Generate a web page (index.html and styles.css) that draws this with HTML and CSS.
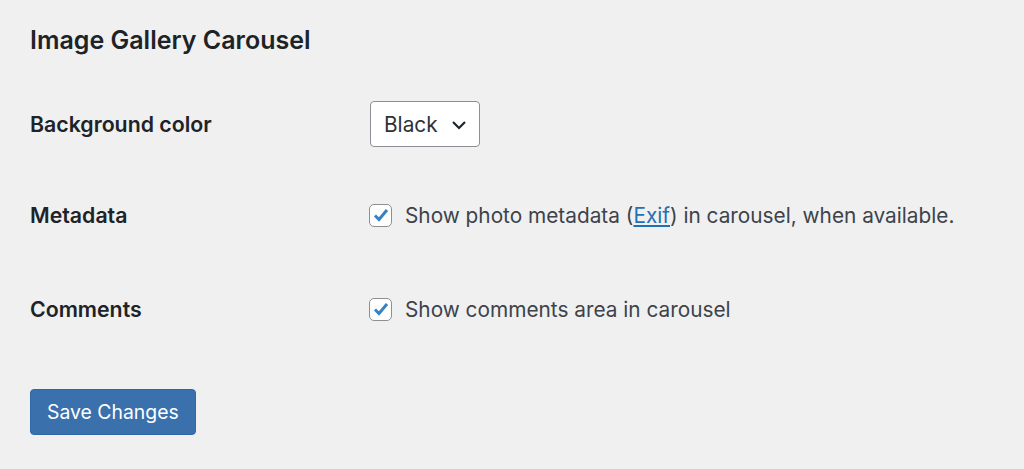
FILE: index.html
```html
<!doctype html>
<html lang="en">
<head>
	<meta charset="utf-8" />
	<title>Carousel settings</title>
	<link rel="stylesheet" href="styles.css">
</head>
<body>
	<div class="wrap">
		<h2 class="title">Image Gallery Carousel</h2>
		<div class="form-table">
			<div class="row row-select">
				<div class="th">Background color</div>
				<div class="td">
					<div class="select">
						<span>Black</span>
						<svg class="chev" width="16" height="10" viewBox="0 0 16 10"><path d="M2 2 L8 8 L14 2" fill="none" stroke="#1d2327" stroke-width="2.2" /></svg>
					</div>
				</div>
			</div>
			<div class="row">
				<div class="th">Metadata</div>
				<div class="td">
					<label class="check">
						<span class="box"><svg width="18" height="16" viewBox="0 0 18 16"><path d="M3 8.5 L7 12.5 L15 3" fill="none" stroke="#3582c4" stroke-width="3" /></svg></span>
						<span>Show photo metadata (<a href="#">Exif</a>) in carousel, when available.</span>
					</label>
				</div>
			</div>
			<div class="row">
				<div class="th">Comments</div>
				<div class="td">
					<label class="check">
						<span class="box"><svg width="18" height="16" viewBox="0 0 18 16"><path d="M3 8.5 L7 12.5 L15 3" fill="none" stroke="#3582c4" stroke-width="3" /></svg></span>
						<span>Show comments area in carousel</span>
					</label>
				</div>
			</div>
		</div>
		<button class="button-primary">Save Changes</button>
	</div>
</body>
</html>
```

FILE: styles.css
```css
* {
	margin: 0;
	padding: 0;
	box-sizing: border-box;
}
body {
	background-color: #f0f0f1;
	color: #3c434a;
	font-family: Inter, "Noto Sans", sans-serif;
	font-size: 20.8px;
}
.wrap {
	padding: 24px 30px 0;
}
.title {
	font-size: 25px;
	font-weight: 600;
	color: #1d2327;
	line-height: 32px;
}
.form-table {
	margin-top: 24px;
}
.row {
	display: grid;
	grid-template-columns: 339px 1fr;
	align-items: center;
	height: 94px;
}
.row-select {
	height: 88px;
}
.th {
	font-weight: 600;
	font-size: 21.3px;
	color: #1d2327;
}
.select {
	display: inline-flex;
	align-items: center;
	gap: 13px;
	height: 46px;
	margin-left: 1px;
	padding: 0 12px 0 13px;
	border: 1.4px solid #8c8f94;
	border-radius: 4px;
	background-color: #fff;
	color: #2c3338;
}
.chev {
	margin-top: 1px;
}
.check {
	display: flex;
	align-items: center;
	gap: 13px;
}
.box {
	width: 23px;
	height: 23px;
	border: 1.4px solid #8c8f94;
	border-radius: 5px;
	background-color: #fff;
	display: flex;
	align-items: center;
	justify-content: center;
}
.check a {
	color: #2271b1;
}
.button-primary {
	margin-top: 33px;
	height: 46px;
	padding: 0 16px;
	background-color: #3a71ac;
	border: 1px solid #2f68a6;
	border-radius: 4px;
	color: #fff;
	font-family: inherit;
	font-size: 19.4px;
}
```
